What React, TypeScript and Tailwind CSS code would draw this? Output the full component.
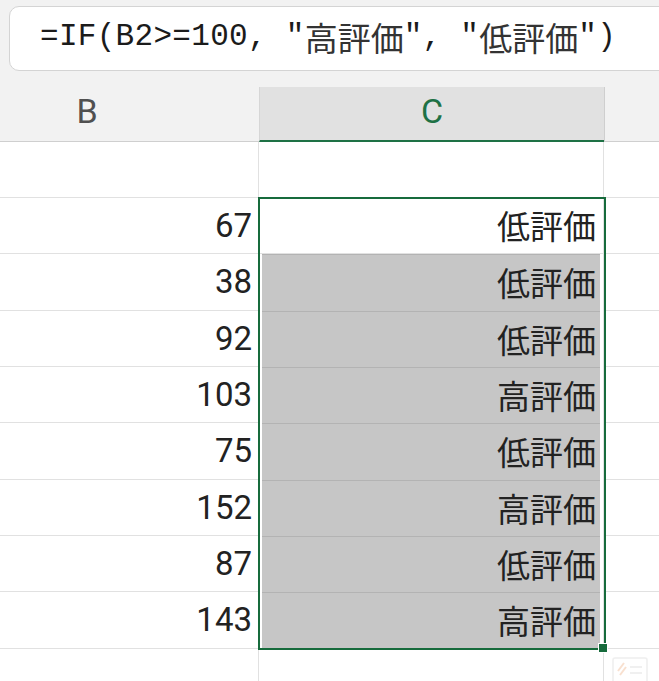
import React from "react";

const rows: { b: string; c: string }[] = [
  { b: "67", c: "低評価" },
  { b: "38", c: "低評価" },
  { b: "92", c: "低評価" },
  { b: "103", c: "高評価" },
  { b: "75", c: "低評価" },
  { b: "152", c: "高評価" },
  { b: "87", c: "低評価" },
  { b: "143", c: "高評価" },
];
const heights = [56, 57, 56, 56, 57, 56, 56, 57];

const numFont = { fontFamily: "Roboto, 'Noto Sans', sans-serif" };
const jpFont = { fontFamily: "'Noto Sans CJK JP', sans-serif" };
const monoFont = { fontFamily: "'Liberation Mono', 'Noto Sans CJK JP', monospace" };

export default function App() {
  return (
    <div className="w-[659px] h-[681px] overflow-hidden bg-white relative">
      <div className="bg-[#f2f2f2] pt-[6px] pl-[9px] h-[87px]">
        <div
          className="h-[65px] w-[720px] rounded-[10px] border border-[#d4d4d4] bg-white flex items-center pl-[30px] pb-[2px] text-[31px] text-[#1b1b1b] whitespace-pre tracking-[0.3px]"
          style={monoFont}
        >
          <span>=IF(B2&gt;=100, "</span>
          <span className="text-[33px] text-[#333] tracking-normal" style={jpFont}>高評価</span>
          <span>", "</span>
          <span className="text-[33px] text-[#333] tracking-normal" style={jpFont}>低評価</span>
          <span>")</span>
        </div>
      </div>
      <div className="flex h-[55px] bg-[#f2f2f2]">
        <div className="w-[259px] border-b border-[#cfcfcf] flex">
          <div className="w-[174px] flex items-center justify-center pb-[6px] text-[34px] text-[#505050]" style={numFont}>
            B
          </div>
        </div>
        <div
          className="w-[345px] bg-[#e1e1e1] border-l border-[#d6d6d6] border-b-2 border-b-[#1e7145] flex items-center justify-center pb-[5px] text-[34px] text-[#1e7145]"
          style={numFont}
        >
          C
        </div>
        <div className="flex-1 border-b border-l border-[#cfcfcf]" />
      </div>
      <div className="relative">
        <div className="flex h-[56px]">
          <div className="w-[259px] border-b border-r border-[#e1e1e1]" />
          <div className="w-[345px] border-b border-r border-[#e1e1e1]" />
          <div className="flex-1 border-b border-[#e1e1e1]" />
        </div>
        {rows.map((r, i) => (
          <div key={i} className="flex" style={{ height: heights[i] }}>
            <div
              className="w-[259px] border-b border-r border-[#e1e1e1] flex items-center justify-end pr-[6px] text-[33px] text-[#222]"
              style={numFont}
            >
              {r.b}
            </div>
            {i === 0 ? (
              <div
                className="w-[345px] border-r border-b border-[#e1e1e1] flex items-center justify-end pr-[7px] text-[33px] text-[#222]"
                style={jpFont}
              >
                {r.c}
              </div>
            ) : (
              <div className="w-[345px] px-[3px] border-r border-[#e1e1e1] flex">
                <div
                  className="flex-1 bg-[#c6c6c6] border-t border-[#b3b3b3] flex items-center justify-end pr-[4px] text-[33px] text-[#222]"
                  style={jpFont}
                >
                  {r.c}
                </div>
              </div>
            )}
            <div className="flex-1 border-b border-[#e1e1e1]" />
          </div>
        ))}
        <div className="flex h-[56px]">
          <div className="w-[259px] border-r border-[#e1e1e1]" />
          <div className="w-[345px] border-r border-[#e1e1e1]" />
          <div className="flex-1 relative">
            <svg className="absolute left-[6px] top-[6px] opacity-40" width="40" height="30" viewBox="0 0 40 30" fill="none">
              <rect x="3" y="3" width="34" height="30" rx="2" stroke="#d8d8d8" strokeWidth="1.5" />
              <path d="M14 8 L8 16 M16 12 L10 20" stroke="#f0b48a" strokeWidth="2" />
              <path d="M20 12 H32 M20 18 H32" stroke="#d0d0d0" strokeWidth="1.5" />
            </svg>
          </div>
        </div>
        <div className="absolute left-[258px] top-[55px] w-[348px] h-[453px] border-2 border-[#176b3c] pointer-events-none" />
        <div className="absolute left-[598px] top-[501px] w-[10px] h-[10px] bg-[#176b3c] border border-white" />
      </div>
    </div>
  );
}
